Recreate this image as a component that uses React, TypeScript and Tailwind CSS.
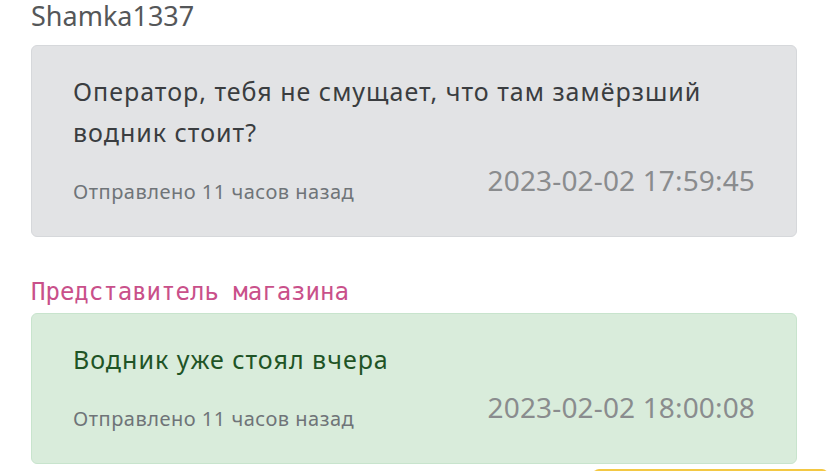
// Переписка по заказу: сообщение покупателя и ответ магазина
const font = { fontFamily: '"Noto Sans", "DejaVu Sans", sans-serif' };

type Msg = {
  author: string;
  authorClass: string;
  text: string;
  sent: string;
  date: string;
  cardClass: string;
  textClass: string;
};

const messages: Msg[] = [
  {
    author: 'Shamka1337',
    authorClass: 'text-[#555759] text-[27px] leading-[32px]',
    text: 'Оператор, тебя не смущает, что там замёрзший водник стоит?',
    sent: 'Отправлено 11 часов назад',
    date: '2023-02-02 17:59:45',
    cardClass: 'mt-[13px] bg-[#e2e3e5] border-[#d6d8db]',
    textClass: 'text-[#3a3d40]',
  },
  {
    author: 'Представитель магазина',
    authorClass:
      'mt-[41px] text-[#c9508a] text-[24px] leading-[28px] font-["DejaVu_Sans_Mono",monospace]',
    text: 'Водник уже стоял вчера',
    sent: 'Отправлено 11 часов назад',
    date: '2023-02-02 18:00:08',
    cardClass: 'mt-[7px] bg-[#d9ecdb] border-[#c8e4cd]',
    textClass: 'text-[#1f5426]',
  },
];

export default function App() {
  return (
    <div className="w-[828px] h-[471px] overflow-hidden bg-white" style={font}>
      <div className="w-[766px] ml-[31px]">
        {messages.map((m, i) => (
          <div key={i}>
            <div className={m.authorClass}>{m.author}</div>
            <div className={`rounded-[6px] border ${m.cardClass} px-[41px] pt-[25px] pb-[31px]`}>
              <p className={`text-[25px] leading-[41px] tracking-[1px] max-w-[650px] ${m.textClass}`}>
                {m.text}
              </p>
              <div className="flex justify-between items-start mt-[11px]">
                <span className="mt-[15px] text-[20px] leading-[26px] tracking-[0.5px] text-[#6f7478]">
                  {m.sent}
                </span>
                <span className="text-[28px] leading-[32px] tracking-[0.15px] text-[#8a8c8e]">{m.date}</span>
              </div>
            </div>
          </div>
        ))}
      </div>
      <div className="ml-[593px] mt-[5px] h-[20px] rounded-t-[6px] border-t-2 border-l-2 border-[#f3c843] bg-[#fff8e1]" />
    </div>
  );
}
